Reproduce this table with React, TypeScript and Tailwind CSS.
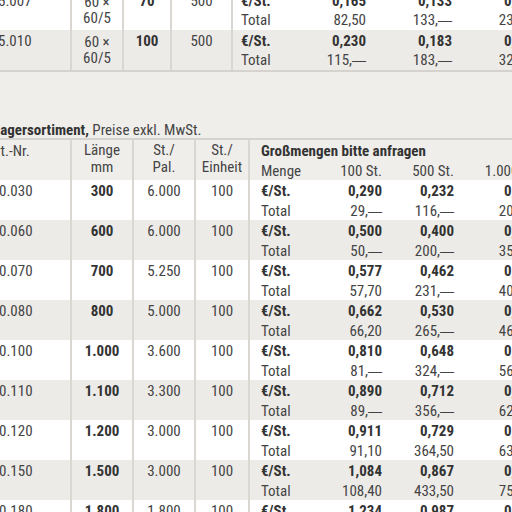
type PriceRow = {
  nr: string;
  len: string;
  pal: string;
  unit: string;
  price: string[];
  total: string[];
};

const rows: PriceRow[] = [
  { nr: '0.030', len: '300', pal: '6.000', unit: '100', price: ['0,290', '0,232', '0,203'], total: ['29,—', '116,—', '203,—'] },
  { nr: '0.060', len: '600', pal: '6.000', unit: '100', price: ['0,500', '0,400', '0,350'], total: ['50,—', '200,—', '350,—'] },
  { nr: '0.070', len: '700', pal: '5.250', unit: '100', price: ['0,577', '0,462', '0,404'], total: ['57,70', '231,—', '404,—'] },
  { nr: '0.080', len: '800', pal: '5.000', unit: '100', price: ['0,662', '0,530', '0,463'], total: ['66,20', '265,—', '463,—'] },
  { nr: '0.100', len: '1.000', pal: '3.600', unit: '100', price: ['0,810', '0,648', '0,567'], total: ['81,—', '324,—', '567,—'] },
  { nr: '0.110', len: '1.100', pal: '3.300', unit: '100', price: ['0,890', '0,712', '0,623'], total: ['89,—', '356,—', '623,—'] },
  { nr: '0.120', len: '1.200', pal: '3.000', unit: '100', price: ['0,911', '0,729', '0,638'], total: ['91,10', '364,50', '638,—'] },
  { nr: '0.150', len: '1.500', pal: '3.000', unit: '100', price: ['1,084', '0,867', '0,759'], total: ['108,40', '433,50', '759,—'] },
  { nr: '0.180', len: '1.800', pal: '1.800', unit: '100', price: ['1,234', '0,987', '0,864'], total: ['123,40', '493,50', '864,—'] },
];

const topRows = [
  { nr: '5.007', pcs: '70', pal: '500', price: ['0,165', '0,133', '0,117'], total: ['82,50', '133,—', '233,—'], shaded: false },
  { nr: '5.010', pcs: '100', pal: '500', price: ['0,230', '0,183', '0,161'], total: ['115,—', '183,—', '322,—'], shaded: true },
];

const amountWidths = ['w-[72px]', 'w-[72px]', 'w-[84px]'];
const topAmountWidths = ['w-[73px]', 'w-[86px]', 'w-[86px]'];

// the condensed face has a very short em dash, so the dash is set in a wider face
function Amount({ value }: { value: string }) {
  if (!value.endsWith('—')) return <>{value}</>;
  return (
    <>
      {value.slice(0, -1)}
      <span className="font-['Liberation_Sans',sans-serif] font-stretch-normal text-[14px]">—</span>
    </>
  );
}

function LowerRow({ row, shaded }: { row: PriceRow; shaded: boolean }) {
  return (
    <div className={`flex h-[40px] shrink-0 ${shaded ? 'bg-[#edebe8]' : 'bg-white'}`}>
      <div className="w-[72px] shrink-0 overflow-hidden border-r-2 border-[#dad7d3] pt-[1px] leading-[20px]">
        <span className="ml-[-1px] block">{row.nr}</span>
      </div>
      <div className="w-[62px] shrink-0 border-r-2 border-[#dad7d3] pt-[1px] text-center font-bold leading-[20px] text-[#333]">{row.len}</div>
      <div className="w-[62px] shrink-0 border-r-2 border-[#dad7d3] pt-[1px] text-center leading-[20px]">{row.pal}</div>
      <div className="w-[54px] shrink-0 border-r-2 border-[#dad7d3] pt-[1px] text-center leading-[20px]">{row.unit}</div>
      <div className="flex flex-col pt-[1px] leading-[20px]">
        <div className="flex text-[#333]">
          <span className="w-[60px] shrink-0 pl-[11px] font-bold">€/St.</span>
          {row.price.map((p, i) => (
            <span key={i} className={`${amountWidths[i]} shrink-0 text-right font-bold`}>{p}</span>
          ))}
        </div>
        <div className="flex">
          <span className="w-[60px] shrink-0 pl-[11px]">Total</span>
          {row.total.map((t, i) => (
            <span key={i} className={`${amountWidths[i]} shrink-0 whitespace-nowrap text-right`}>
              <Amount value={t} />
            </span>
          ))}
        </div>
      </div>
    </div>
  );
}

export default function App() {
  return (
    <div className="flex h-[512px] w-[512px] flex-col overflow-hidden bg-[#f0eeeb] font-['Roboto_Condensed','Noto_Sans_Condensed','Open_Sans_Condensed','Noto_Sans',sans-serif] font-stretch-condensed text-[15px] text-[#444]">
      {/* top table, continued from the previous page */}
      <div className="mt-[-10px] flex shrink-0 flex-col border-b-2 border-[#d6d3cf]">
        {topRows.map((r) => (
          <div key={r.nr} className={`flex h-[40px] ${r.shaded ? 'bg-[#edebe8]' : 'bg-white'}`}>
            <div className="w-[72px] shrink-0 overflow-hidden border-r-2 border-[#dad7d3] pt-[2px] leading-[19px]">
              <span className="ml-[-2px] block">{r.nr}</span>
            </div>
            <div className="w-[52px] shrink-0 border-r-2 border-[#dad7d3] pt-[4px] text-center leading-[16px]">
              60 ×<br />60/5
            </div>
            <div className="w-[48px] shrink-0 border-r-2 border-[#dad7d3] pt-[2px] text-center font-bold leading-[19px] text-[#333]">{r.pcs}</div>
            <div className="w-[61px] shrink-0 border-r-2 border-[#dad7d3] pt-[2px] text-center leading-[19px]">{r.pal}</div>
            <div className="flex flex-col pt-[2px] leading-[19px]">
              <div className="flex text-[#333]">
                <span className="w-[60px] shrink-0 pl-[8px] font-bold">€/St.</span>
                {r.price.map((p, i) => (
                  <span key={i} className={`${topAmountWidths[i]} shrink-0 text-right font-bold`}>{p}</span>
                ))}
              </div>
              <div className="flex">
                <span className="w-[60px] shrink-0 pl-[8px]">Total</span>
                {r.total.map((t, i) => (
                  <span key={i} className={`${topAmountWidths[i]} shrink-0 whitespace-nowrap text-right`}>
                    <Amount value={t} />
                  </span>
                ))}
              </div>
            </div>
          </div>
        ))}
      </div>

      {/* section title */}
      <div className="flex h-[66px] shrink-0 items-end">
        <p className="ml-[-7px] whitespace-nowrap leading-[16px]">
          <span className="font-bold text-[#333]">Lagersortiment,</span> Preise exkl. MwSt.
        </p>
      </div>

      {/* lower table */}
      <div className="flex shrink-0 flex-col border-t-2 border-[#d6d3cf]">
        <div className="flex h-[40px] shrink-0">
          <div className="w-[72px] shrink-0 overflow-hidden border-r-2 border-[#dad7d3] pt-[1px] leading-[20px]">
            <span className="ml-[-13px] block whitespace-nowrap">Art.-Nr.</span>
          </div>
          <div className="w-[62px] shrink-0 border-r-2 border-[#dad7d3] pt-[2px] text-center leading-[17px]">
            Länge<br />mm
          </div>
          <div className="w-[62px] shrink-0 border-r-2 border-[#dad7d3] pt-[2px] text-center leading-[17px]">
            St./<br />Pal.
          </div>
          <div className="w-[54px] shrink-0 border-r-2 border-[#dad7d3] pt-[2px] text-center leading-[17px]">
            St./<br />Einheit
          </div>
          <div className="flex flex-col pt-[1px] leading-[20px]">
            <div className="whitespace-nowrap pl-[11px] font-bold text-[#333]">Großmengen bitte anfragen</div>
            <div className="flex whitespace-nowrap">
              <span className="w-[60px] shrink-0 pl-[11px]">Menge</span>
              <span className="w-[72px] shrink-0 text-right">100 St.</span>
              <span className="w-[72px] shrink-0 text-right">500 St.</span>
              <span className="w-[84px] shrink-0 text-right">1.000 St.</span>
            </div>
          </div>
        </div>
        {rows.map((r, i) => (
          <LowerRow key={r.nr} row={r} shaded={i % 2 === 1} />
        ))}
      </div>
    </div>
  );
}
